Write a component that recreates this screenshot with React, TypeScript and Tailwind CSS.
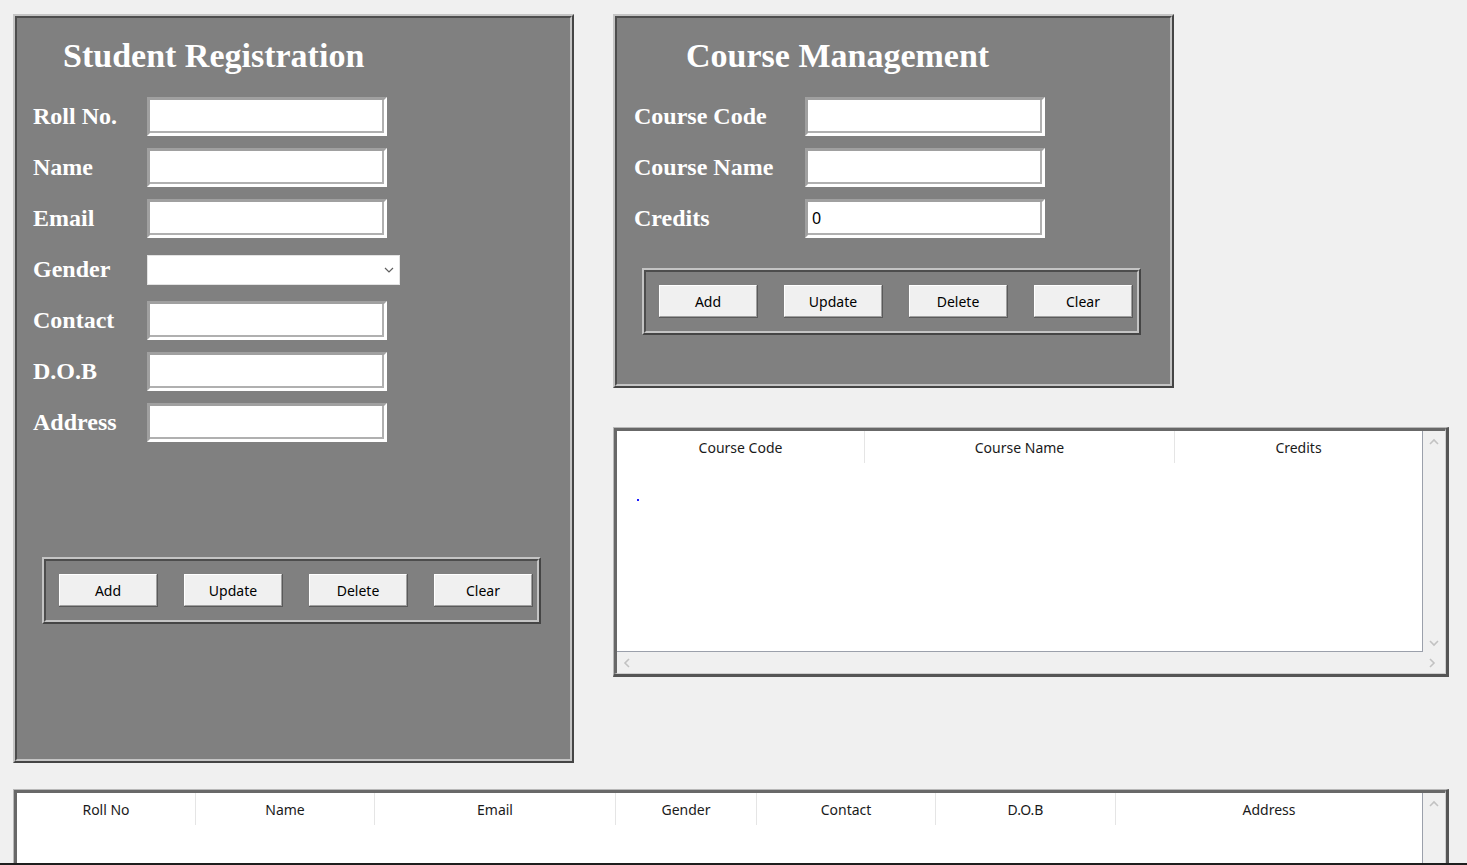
import { ReactNode } from 'react';

const serif = "font-['Liberation_Serif','Times_New_Roman',serif]";
const ui = "font-['Noto_Sans','Open_Sans',sans-serif]";

const Ridge = ({ className, inner, children }: { className: string; inner: string; children: ReactNode }) => (
  <div className={`border-2 border-t-[#c4c4c4] border-l-[#c4c4c4] border-b-[#454545] border-r-[#454545] ${className}`}>
    <div className={`h-full border-2 border-t-[#4d4d4d] border-l-[#4d4d4d] border-b-[#c4c4c4] border-r-[#c4c4c4] ${inner}`}>
      {children}
    </div>
  </div>
);

const Entry = ({ value = '' }: { value?: string }) => (
  <div className="w-[240px] h-[39px] flex border-[3px] border-t-[#a0a0a0] border-l-[#a0a0a0] border-b-white border-r-white">
    <div className={`flex-1 bg-white border-b-2 border-r-2 border-[#b0b0b0] flex items-center pl-[4px] text-[16px] text-black ${ui}`}>
      {value}
    </div>
  </div>
);

const Combo = () => (
  <div className="w-[253px] h-[30px] bg-white border border-[#e3e3e3] flex items-center justify-end pr-[5px]">
    <svg width="10" height="6" viewBox="0 0 10 6">
      <polyline points="1,1 5,5 9,1" fill="none" stroke="#606060" strokeWidth="1.2" />
    </svg>
  </div>
);

const Btn = ({ label }: { label: string }) => (
  <div className="w-[99px] h-[33px] border-b border-r border-[#5a5a5a]">
    <div className={`h-full border border-t-white border-l-white border-b-[#a0a0a0] border-r-[#a0a0a0] bg-[#f0f0f0] flex items-center justify-center text-[14px] text-black ${ui}`}>
      {label}
    </div>
  </div>
);

const BtnFrame = () => (
  <Ridge className="w-[499px] h-[67px]" inner="flex items-center pl-[13px] gap-[26px]">
    <Btn label="Add" />
    <Btn label="Update" />
    <Btn label="Delete" />
    <Btn label="Clear" />
  </Ridge>
);

const Field = ({ label, labelW, children }: { label: string; labelW: string; children: ReactNode }) => (
  <div className="h-[39px] flex items-center">
    <div className={`${labelW} pb-[2px] text-[24px] font-bold text-white ${serif}`}>{label}</div>
    {children}
  </div>
);

const Chevron = ({ dir }: { dir: 'up' | 'down' | 'left' | 'right' }) => {
  const pts = {
    up: '1,6 5,2 9,6',
    down: '1,2 5,6 9,2',
    left: '6,1 2,5 6,9',
    right: '2,1 6,5 2,9',
  }[dir];
  const horiz = dir === 'left' || dir === 'right';
  return (
    <svg width={horiz ? 8 : 10} height={horiz ? 10 : 8} viewBox={horiz ? '0 0 8 10' : '0 0 10 8'}>
      <polyline points={pts} fill="none" stroke="#c2c2c2" strokeWidth="1.6" />
    </svg>
  );
};

type Col = { label: string; w: string };

const Tree = ({ cols, className, hscroll, dot }: { cols: Col[]; className: string; hscroll?: boolean; dot?: boolean }) => (
  <div className={`border-t border-l border-[#b8b8b8] border-b-[3px] border-r-[3px] border-b-[#555555] border-r-[#555555] ${className}`}>
    <div className="h-full flex flex-col border-t-[3px] border-l-[3px] border-t-[#686868] border-l-[#686868] border-b border-r border-b-[#cfcfcf] border-r-[#cfcfcf] bg-[#f0f0f0]">
      <div className="flex flex-1 min-h-0">
        <div className="flex flex-col w-[806px] flex-1 bg-white border-r border-b border-[#9ba0ab]">
          <div className="flex h-[32px] shrink-0">
            {cols.map((c, i) => (
              <div
                key={c.label}
                className={`${c.w} shrink-0 flex items-center justify-center text-[14px] text-[#1a1a1a] ${ui} ${i < cols.length - 1 ? 'border-r border-[#e5e5e5]' : ''}`}
              >
                {c.label}
              </div>
            ))}
          </div>
          <div className="flex-1 pl-[20px] pt-[36px]">
            {dot && <div className="w-[2px] h-[2px] bg-[#1a1aff]" />}
          </div>
        </div>
        <div className="w-[22px] shrink-0 flex flex-col items-center justify-between pt-[7px] pb-[5px]">
          <Chevron dir="up" />
          {hscroll && <Chevron dir="down" />}
        </div>
      </div>
      {hscroll && (
        <div className="h-[21px] shrink-0 flex items-center justify-between pl-[6px] pr-[9px]">
          <Chevron dir="left" />
          <Chevron dir="right" />
        </div>
      )}
    </div>
  </div>
);

export default function App() {
  return (
    <div className="w-[1467px] h-[865px] bg-[#f0f0f0] flex flex-col overflow-hidden">
      <div className="flex pt-[14px] pl-[13px] shrink-0">
        <Ridge className="w-[561px] h-[749px]" inner="bg-[#808080] flex flex-col">
          <div className={`mt-[18px] mb-[21px] pl-[46px] h-[40px] leading-[40px] text-[34px] font-bold text-white ${serif}`}>
            Student Registration
          </div>
          <div className="pl-[16px] flex flex-col gap-[12px]">
            <Field label="Roll No." labelW="w-[114px]"><Entry /></Field>
            <Field label="Name" labelW="w-[114px]"><Entry /></Field>
            <Field label="Email" labelW="w-[114px]"><Entry /></Field>
            <Field label="Gender" labelW="w-[114px]"><Combo /></Field>
            <Field label="Contact" labelW="w-[114px]"><Entry /></Field>
            <Field label="D.O.B" labelW="w-[114px]"><Entry /></Field>
            <Field label="Address" labelW="w-[114px]"><Entry /></Field>
          </div>
          <div className="mt-[115px] pl-[25px]">
            <BtnFrame />
          </div>
        </Ridge>

        <div className="ml-[39px] flex flex-col">
          <Ridge className="w-[561px] h-[374px]" inner="bg-[#808080] flex flex-col">
            <div className={`mt-[18px] mb-[21px] pl-[69px] h-[40px] leading-[40px] text-[34px] font-bold text-white ${serif}`}>
              Course Management
            </div>
            <div className="pl-[17px] flex flex-col gap-[12px]">
              <Field label="Course Code" labelW="w-[171px]"><Entry /></Field>
              <Field label="Course Name" labelW="w-[171px]"><Entry /></Field>
              <Field label="Credits" labelW="w-[171px]"><Entry value="0" /></Field>
            </div>
            <div className="mt-[30px] pl-[25px]">
              <BtnFrame />
            </div>
          </Ridge>

          <Tree
            className="mt-[39px] w-[836px] h-[250px]"
            hscroll
            dot
            cols={[
              { label: 'Course Code', w: 'w-[248px]' },
              { label: 'Course Name', w: 'w-[310px]' },
              { label: 'Credits', w: 'w-[247px]' },
            ]}
          />
        </div>
      </div>

      <div className="flex-1 min-h-0 overflow-hidden pt-[26px] pl-[13px]">
        <Tree
          className="w-[1436px] h-[250px]"
          cols={[
            { label: 'Roll No', w: 'w-[179px]' },
            { label: 'Name', w: 'w-[179px]' },
            { label: 'Email', w: 'w-[241px]' },
            { label: 'Gender', w: 'w-[141px]' },
            { label: 'Contact', w: 'w-[179px]' },
            { label: 'D.O.B', w: 'w-[180px]' },
            { label: 'Address', w: 'w-[306px]' },
          ]}
        />
      </div>
      <div className="h-[2px] shrink-0 bg-[#1e1e1e]" />
    </div>
  );
}
